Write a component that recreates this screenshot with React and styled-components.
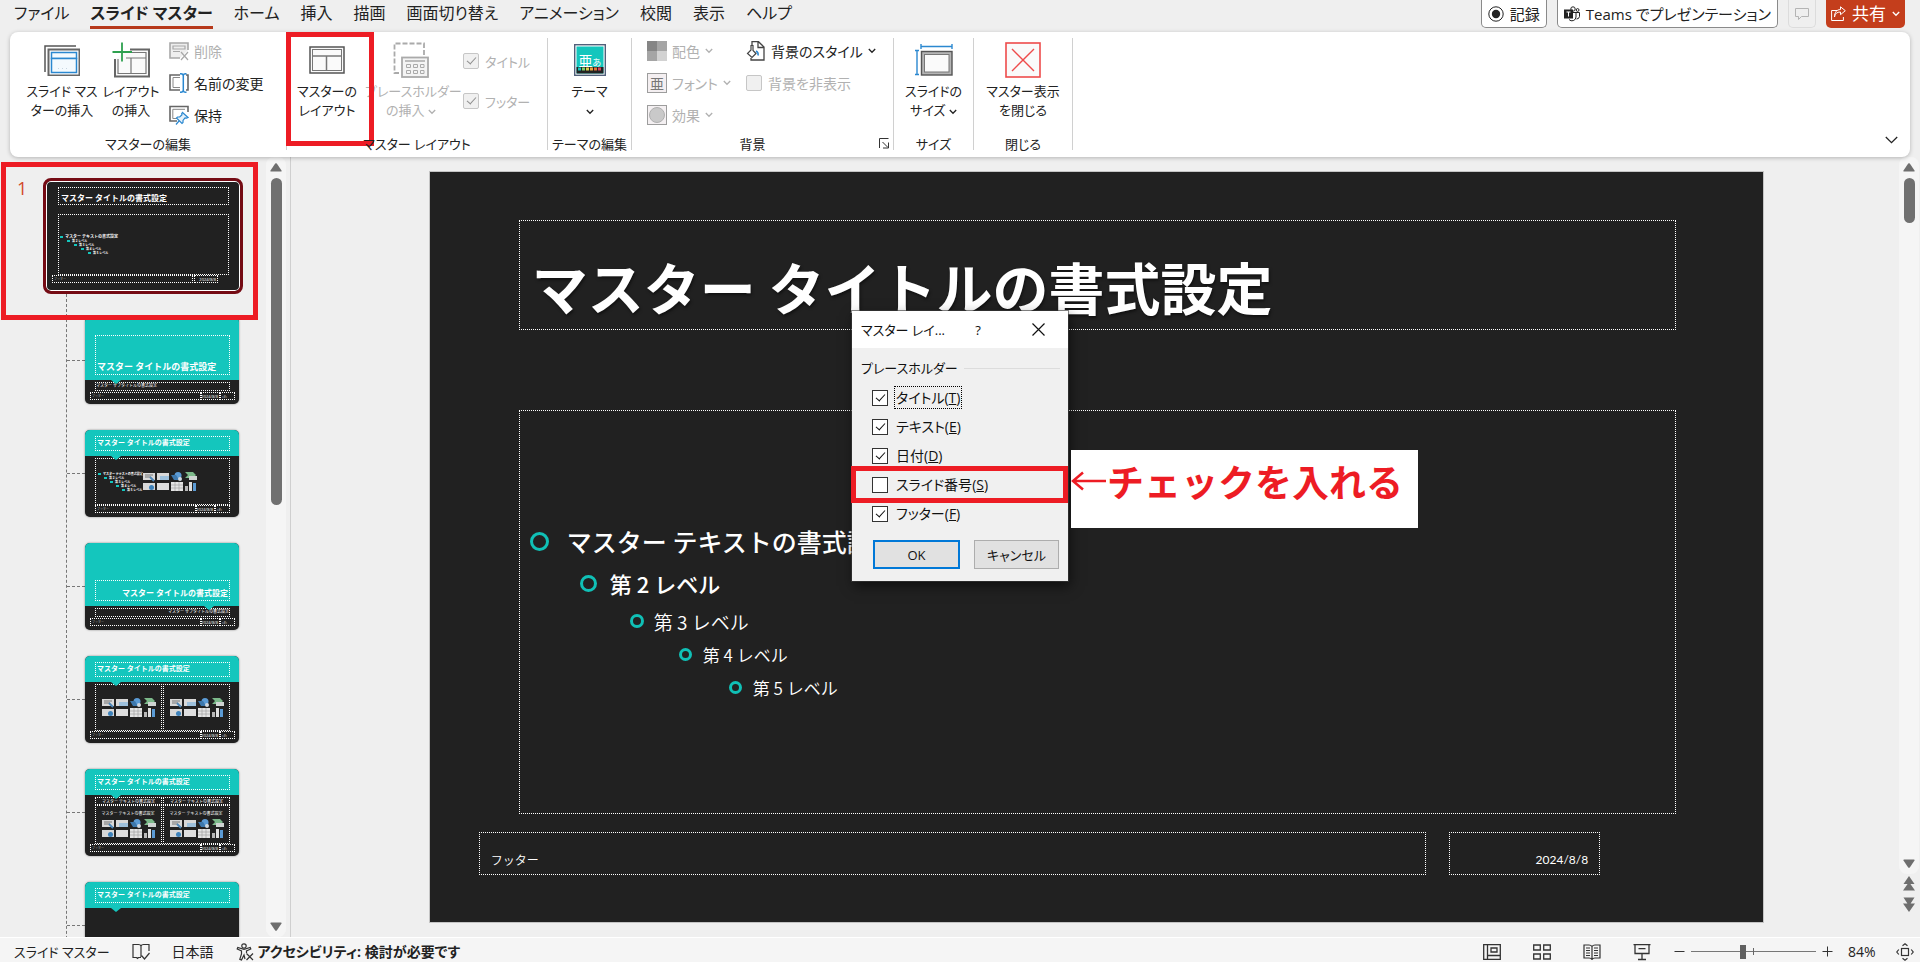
import React from 'react';
import styled, { createGlobalStyle } from 'styled-components';

const TEAL = '#14c6bd';
const RED = '#ed1c24';
const DARK = '#212121';

const TABS = [
  'ファイル',
  'スライド マスター',
  'ホーム',
  '挿入',
  '描画',
  '画面切り替え',
  'アニメーション',
  '校閲',
  '表示',
  'ヘルプ',
];

const LEVELS = [
  { text: 'マスター テキストの書式設定', size: 25, row: 41, indent: 0, ring: 19, gap: 18, weight: 500 },
  { text: '第 2 レベル', size: 22, row: 43, indent: 50, ring: 17, gap: 13, weight: 500 },
  { text: '第 3 レベル', size: 19, row: 33, indent: 100, ring: 14, gap: 10, weight: 350 },
  { text: '第 4 レベル', size: 17, row: 33, indent: 149, ring: 13, gap: 11, weight: 350 },
  { text: '第 5 レベル', size: 17, row: 33, indent: 199, ring: 13, gap: 11, weight: 350 },
];

const PLACEHOLDERS = [
  { id: 'title', label: 'タイトル', accessKey: 'T', checked: true, focused: true },
  { id: 'text', label: 'テキスト', accessKey: 'E', checked: true },
  { id: 'date', label: '日付', accessKey: 'D', checked: true },
  { id: 'number', label: 'スライド番号', accessKey: 'S', checked: false, marked: true },
  { id: 'footer', label: 'フッター', accessKey: 'F', checked: true },
];

const SLIDE_TITLE = 'マスター タイトルの書式設定';
const SLIDE_TEXT = 'マスター テキストの書式設定';

function App() {
  return (
    <Shell>
      <GlobalStyle />
      <TopBar />
      <Ribbon />
      <Workspace>
        <ThumbnailPanel />
        <Canvas>
          <Slide />
        </Canvas>
        <CanvasScrollbar />
      </Workspace>
      <StatusBar />
      <LayoutDialog />
    </Shell>
  );
}

/* ---------- Tabs ---------- */

const TopBar = () => (
  <TabBar>
    <TabList>
      {TABS.map((tab) => (
        <Tab key={tab} $active={tab === 'スライド マスター'}>
          {tab}
        </Tab>
      ))}
    </TabList>
    <TopActions>
      <OutlineButton>
        <svg width="16" height="16" viewBox="0 0 16 16">
          <circle cx="8" cy="8" r="7.2" fill="none" stroke="#222" />
          <circle cx="8" cy="8" r="4.2" fill="#222" />
        </svg>
        記録
      </OutlineButton>
      <OutlineButton>
        <svg width="16" height="16" viewBox="0 0 16 16" fill="none" stroke="#222">
          <circle cx="9" cy="3" r="2.2" />
          <circle cx="13.6" cy="4" r="1.4" />
          <path d="M8 6.5h7.5v4a3 3 0 0 1-3 2.5M12 6.5v4.5a4 4 0 0 1-7 2.5" />
          <rect x="0.5" y="4" width="8" height="8" fill="#222" />
          <path d="M2.5 6h4M4.5 6v4.5" stroke="#fff" />
        </svg>
        Teams でプレゼンテーション
      </OutlineButton>
      <OutlineButton $faded aria-label="コメント">
        <svg width="14" height="14" viewBox="0 0 14 14" fill="none" stroke="#b4b4b4">
          <path d="M.5 1.5h13v8H6.5L3.5 12.5v-3H.5z" />
        </svg>
      </OutlineButton>
      <ShareButton>
        <svg width="15" height="16" viewBox="0 0 15 16" fill="none" stroke="#fff">
          <path d="M6 4.5H.6v10h11.8V11" />
          <path d="M3.5 11c.4-3.5 2.5-5 6-5V8.7L14.3 4.7 9.5.8V3.5C5.5 3.7 3.6 6.5 3.5 11z" />
        </svg>
        共有
        <Chevron />
      </ShareButton>
    </TopActions>
  </TabBar>
);

const Chevron = () => (
  <svg width="8" height="6" viewBox="0 0 8 6" fill="none" stroke="currentColor" strokeWidth="1.3">
    <path d="M.8 1 4 4.3 7.2 1" />
  </svg>
);

/* ---------- Ribbon ---------- */

const Ribbon = () => (
  <RibbonBar>
    <Group $width={277} label="マスターの編集" $inset={16}>
      <BigButton $width={72}>
        <IconSlot>
          <InsertMasterIcon />
        </IconSlot>
        スライド マス
        <br />
        ターの挿入
      </BigButton>
      <BigButton $width={66}>
        <IconSlot>
          <InsertLayoutIcon />
        </IconSlot>
        レイアウト
        <br />
        の挿入
      </BigButton>
      <SmallColumn $before={5}>
        <SmallButton disabled>
          <DeleteIcon />
          削除
        </SmallButton>
        <SmallButton>
          <RenameIcon />
          名前の変更
        </SmallButton>
        <SmallButton>
          <PreserveIcon />
          保持
        </SmallButton>
      </SmallColumn>
    </Group>

    <Group $width={261} label="マスター レイアウト" $inset={2}>
      <BigButton $width={76}>
        <IconSlot>
          <LayoutIcon />
        </IconSlot>
        マスターの
        <br />
        レイアウト
      </BigButton>
      <BigButton $width={92} disabled>
        <IconSlot>
          <PlaceholderIcon />
        </IconSlot>
        プレースホルダー
        <br />
        の挿入 <Chevron />
      </BigButton>
      <CheckColumn>
        <CheckLabel>
          <RibbonCheck type="checkbox" defaultChecked disabled />
          タイトル
        </CheckLabel>
        <CheckLabel>
          <RibbonCheck type="checkbox" defaultChecked disabled />
          フッター
        </CheckLabel>
      </CheckColumn>
      <RibbonMark />
    </Group>

    <Group $width={84} label="テーマの編集">
      <BigButton $width={83}>
        <IconSlot>
          <ThemeIcon />
        </IconSlot>
        テーマ
        <br />
        <Chevron />
      </BigButton>
    </Group>

    <Group $width={262} label="背景" $inset={15} launcher>
      <SmallColumn $width={99}>
        <SmallButton disabled>
          <ColorsIcon />
          配色 <Chevron />
        </SmallButton>
        <SmallButton disabled>
          <FontsIcon />
          フォント <Chevron />
        </SmallButton>
        <SmallButton disabled>
          <EffectsIcon />
          効果 <Chevron />
        </SmallButton>
      </SmallColumn>
      <SmallColumn>
        <SmallButton>
          <BackgroundIcon />
          背景のスタイル <Chevron />
        </SmallButton>
        <CheckLabel $large>
          <RibbonCheck type="checkbox" disabled />
          背景を非表示
        </CheckLabel>
      </SmallColumn>
    </Group>

    <Group $width={80} label="サイズ">
      <BigButton $width={79}>
        <IconSlot>
          <SlideSizeIcon />
        </IconSlot>
        スライドの
        <br />
        サイズ <Chevron />
      </BigButton>
    </Group>

    <Group $width={99} label="閉じる">
      <BigButton $width={98}>
        <IconSlot>
          <svg width="36" height="36" viewBox="0 0 36 36" fill="none" stroke="#ee4b4b">
            <rect x="1" y="1" width="34" height="34" fill="#fafafa" strokeWidth="1.6" />
            <path d="M7 7l22 22M29 7 7 29" strokeWidth="1.4" />
          </svg>
        </IconSlot>
        マスター表示
        <br />
        を閉じる
      </BigButton>
    </Group>

    <CollapseButton aria-label="リボンを折りたたむ">
      <svg width="13" height="8" viewBox="0 0 13 8" fill="none" stroke="#222" strokeWidth="1.3">
        <path d="M.8 1 6.5 6.6 12.2 1" />
      </svg>
    </CollapseButton>
  </RibbonBar>
);

const Group = ({ label, launcher, children, ...rest }) => (
  <GroupBox {...rest}>
    <GroupBody>{children}</GroupBody>
    <GroupLabel $launcher={launcher}>
      {label}
      {launcher && (
        <Launcher aria-label="背景の書式設定">
          <svg width="10" height="11" viewBox="0 0 10 11" fill="none" stroke="#333">
            <path d="M.5 10V.5H9.5M3.5 4l5.5 5.5M9.5 4.5V10H4" />
          </svg>
        </Launcher>
      )}
    </GroupLabel>
  </GroupBox>
);

const InsertMasterIcon = () => (
  <svg width="36" height="32" viewBox="0 0 36 32" fill="none">
    <path d="M1 28V2H32" stroke="#555" strokeWidth="1.5" />
    <rect x="4.5" y="5.5" width="31" height="26" fill="#fff" stroke="#666" strokeWidth="2" />
    <rect x="7.5" y="8.5" width="25" height="6" stroke="#2b88d0" strokeWidth="1.5" fill="#f4fafe" />
    <rect x="7.5" y="14.5" width="25" height="14" stroke="#2b88d0" strokeWidth="1.5" fill="#f4fafe" />
    <path d="M14 24.5h12" stroke="#c8d6e2" strokeDasharray="1 3" />
  </svg>
);

const InsertLayoutIcon = () => (
  <svg width="38" height="36" viewBox="0 0 38 36" fill="none">
    <path d="M18 7.5H37V34.5H3V17" stroke="#666" strokeWidth="2" fill="#fafafa" />
    <path d="M6 17V31.5H34V10.5H18M34 16H14M19 16.5v15" stroke="#777" strokeWidth="1.2" />
    <path d="M10 .5V19.5M.5 10H20" stroke="#2ea04f" strokeWidth="1.8" />
  </svg>
);

const LayoutIcon = () => (
  <svg width="36" height="28" viewBox="0 0 36 28" fill="none">
    <rect x="1" y="1" width="34" height="26" stroke="#555" strokeWidth="1.5" fill="#fafafa" />
    <rect x="3.5" y="3.5" width="29" height="21" stroke="#777" />
    <path d="M3.5 10H32.5M17.5 10V24.5" stroke="#777" strokeWidth="1.5" />
  </svg>
);

const PlaceholderIcon = () => (
  <svg width="36" height="36" viewBox="0 0 36 36" fill="none" stroke="#aaa">
    <path d="M6 31H1.5V1.5H31V13" strokeWidth="1.8" strokeDasharray="5 2" />
    <rect x="9" y="15.5" width="26" height="19.5" strokeWidth="1.8" fill="#f4f4f4" />
    <path d="M12 19h20" strokeWidth="1.5" />
    <path d="M13.5 22.5h4v3h-4zM20.5 22.5h4v3h-4zM27.5 22.5h3.5v3h-3.5zM13.5 28.5h4v3h-4zM20.5 28.5h4v3h-4zM27.5 28.5h3.5v3h-3.5z" />
  </svg>
);

const DeleteIcon = () => (
  <svg width="20" height="20" viewBox="0 0 20 20" fill="none" stroke="#a8a8a8">
    <path d="M11 17H1V2H19V9" strokeWidth="1.6" fill="#eee" />
    <path d="M4 5h12v3H4zM4 10.5h7" strokeWidth="1.2" />
    <path d="M12 11l7 8M19 11l-7 8" strokeWidth="1.2" />
  </svg>
);

const RenameIcon = () => (
  <svg width="20" height="20" viewBox="0 0 20 20" fill="none">
    <path d="M11 2H1V17H11M17 2h2V17h-2" stroke="#666" strokeWidth="1.6" />
    <path d="M11 4.5H4V14.5h7" stroke="#888" />
    <path d="M11 .7c2.5 0 3.3.6 3.3 2V17.3c0 1.400-.8 2-3.3 2M17.5.7c-2.3 0-3.2.6-3.2 2M17.5 19.3c-2.3 0-3.2-.6-3.2-2" stroke="#2b88d0" strokeWidth="1.5" />
  </svg>
);

const PreserveIcon = () => (
  <svg width="20" height="20" viewBox="0 0 20 20" fill="none">
    <path d="M8 16H1V1.5H19V7" stroke="#666" strokeWidth="1.6" />
    <path d="M8 13.5H3.8V4.3H16" stroke="#888" />
    <path d="M13.5 7.5l5.5 5-1.5.7-1.5-.3-2 2.5v2.1l-1 1L7.5 13l1-1h2.2l2.3-2.2-.3-1.2zM10 16l-3 3.5" stroke="#2b88d0" strokeWidth="1.2" fill="#e6f2fb" />
  </svg>
);

const ThemeIcon = () => (
  <svg width="32" height="32" viewBox="0 0 32 32">
    <rect x=".7" y=".7" width="30.6" height="30.6" fill="#fff" stroke="#51607a" strokeWidth="1.4" />
    <rect x="2.5" y="2.5" width="27" height="27" fill={TEAL} />
    <rect x="2.5" y="23" width="27" height="6.5" fill="#222" />
    <text x="4.5" y="21.5" fontSize="14" fill="#fff">亜</text>
    <text x="18.5" y="21.5" fontSize="9" fill="#fff">あ</text>
    {['#14c6bd', '#7fcf6b', '#d9d04a', '#e8a33c', '#e0733a', '#d9435a'].map((color, i) => (
      <rect key={color} x={4 + i * 4} y="23.5" width="3" height="3" fill={color} />
    ))}
  </svg>
);

const ColorsIcon = () => (
  <svg width="20" height="20" viewBox="0 0 20 20">
    <rect width="10" height="10" fill="#858585" />
    <rect x="10" width="10" height="10" fill="#a5a5a5" />
    <rect y="10" width="10" height="10" fill="#a5a5a5" />
    <rect x="10" y="10" width="10" height="10" fill="#d2d2d2" />
  </svg>
);

const FontsIcon = () => (
  <svg width="20" height="20" viewBox="0 0 20 20">
    <rect x=".5" y=".5" width="19" height="19" fill="#f4eff1" stroke="#9d9d9d" />
    <text x="3" y="15.5" fontSize="14" fill="#777">亜</text>
  </svg>
);

const EffectsIcon = () => (
  <svg width="20" height="20" viewBox="0 0 20 20">
    <rect x=".5" y=".5" width="19" height="19" fill="#f4f0f2" stroke="#9d9d9d" />
    <circle cx="10" cy="10" r="7.5" fill="#c9c9c9" stroke="#b0b0b0" />
  </svg>
);

const BackgroundIcon = () => (
  <svg width="20" height="20" viewBox="0 0 20 20" fill="none" stroke="#444">
    <path d="M6 4V.7h6.5L18 6V19H5v-2M12 1v5.5h6" strokeWidth="1.3" />
    <path d="M10 10c2 1 2.5 2.5 2 4.5" stroke="#2b88d0" strokeWidth="1.5" />
    <path d="M5 4.5h2v5l3 3-4 4-4.5-4L5 9z" fill="#fff" strokeWidth="1.2" />
  </svg>
);

const SlideSizeIcon = () => (
  <svg width="38" height="32" viewBox="0 0 38 32" fill="none">
    <path d="M6 2.5H37.5M6 0v5M37 0v5M2 6.5V30.5M0 6.5h4M0 30.5h4" stroke="#2b88d0" strokeWidth="1.4" />
    <rect x="6.5" y="7.5" width="30.5" height="23.5" stroke="#555" strokeWidth="1.4" fill="#b5b5b5" />
    <rect x="9.5" y="10.5" width="24.5" height="17.5" stroke="#777" fill="#fafafa" />
  </svg>
);

/* ---------- Thumbnails ---------- */

const ThumbnailPanel = () => (
  <Panel>
    <PanelContent>
      <MasterRow>
        <MasterNumber>1</MasterNumber>
        <MasterThumb>
          <MasterTitle $size={8}>{SLIDE_TITLE}</MasterTitle>
          <MasterBody>
            <TinyList>
              {LEVELS.map((level, i) => (
                <TinyItem key={level.text} $indent={i * 7} $size={i === 0 ? 4 : 3}>
                  {level.text}
                </TinyItem>
              ))}
            </TinyList>
          </MasterBody>
          <MasterFooter>
            <MiniBox $grow>
              <TinyText $faint>フッター</TinyText>
            </MiniBox>
            <MiniBox $width={24} $align="flex-end">
              <TinyText>2024/8/8</TinyText>
            </MiniBox>
          </MasterFooter>
        </MasterThumb>
        <PanelMark />
      </MasterRow>
      <Tree>
        <LayoutThumb tall subtitle />
        <LayoutThumb>
          <MiniBox $grow $pad={2}>
            <TinyBullets />
            <ContentIcons />
          </MiniBox>
        </LayoutThumb>
        <LayoutThumb tall subtitle right />
        <LayoutThumb wide>
          <MiniBox $grow $center>
            <ContentIcons />
          </MiniBox>
          <MiniBox $grow $center>
            <ContentIcons />
          </MiniBox>
        </LayoutThumb>
        <LayoutThumb wide>
          <ComparisonHalf />
          <ComparisonHalf />
        </LayoutThumb>
        <LayoutThumb />
      </Tree>
    </PanelContent>
    <Scrollbar>
      <ArrowButton aria-label="上へスクロール">
        <ArrowGlyph up />
      </ArrowButton>
      <ScrollThumb $length={327} />
      <ScrollSpacer />
      <ArrowButton aria-label="下へスクロール">
        <ArrowGlyph />
      </ArrowButton>
    </Scrollbar>
  </Panel>
);

const LayoutThumb = ({ tall, subtitle, right, wide, children }) => (
  <Branch>
    <ThumbCard>
      <Band $tall={tall}>
        <BandTitle $size={tall && !right ? 9 : tall ? 8 : 7} $right={right}>
          {SLIDE_TITLE}
        </BandTitle>
        <Pointer $right={right} />
      </Band>
      {subtitle && (
        <SubtitleBox $right={right}>
          <TinyText>マスター サブタイトルの書式設定</TinyText>
        </SubtitleBox>
      )}
      {children && <ThumbBody>{children}</ThumbBody>}
      {(subtitle || children) && (
        <ThumbFooter $wide={subtitle || wide}>
          <MiniBox $grow>
            <TinyText $faint>フッター</TinyText>
          </MiniBox>
          <MiniBox $width={19} $align="flex-end">
            <TinyText>2024/8/8</TinyText>
          </MiniBox>
          <MiniBox $width={15}>
            <TinyText>‹#›</TinyText>
          </MiniBox>
        </ThumbFooter>
      )}
    </ThumbCard>
  </Branch>
);

const ComparisonHalf = () => (
  <Half>
    <HalfHeading>
      <TinyText>{SLIDE_TEXT}</TinyText>
    </HalfHeading>
    <MiniBox $grow $center>
      <HalfStack>
        <TinyText>{SLIDE_TEXT}</TinyText>
        <ContentIcons />
      </HalfStack>
    </MiniBox>
  </Half>
);

const TinyBullets = () => (
  <TinyList>
    {LEVELS.map((level, i) => (
      <TinyItem key={level.text} $indent={i * 6} $size={3}>
        {level.text}
      </TinyItem>
    ))}
  </TinyList>
);

const ContentIcons = () => (
  <svg width="54" height="19" viewBox="0 0 54 19">
    <rect y="1" width="12" height="7" fill="#d8d8d8" />
    <path d="M2 3h8M2 5h6" stroke="#777" />
    <path d="M7 5l4 4" stroke="#4d86b8" strokeWidth="2" />
    <rect x="14" y="1" width="12" height="7" fill="#d8d8d8" />
    <rect x="17" y="4" width="9" height="4" fill="#9dc0dc" />
    <circle cx="35" cy="3.5" r="3.5" fill="#5b9bd5" />
    <path d="M28 3h5l3 5h-5z" fill="#3d78ad" />
    <circle cx="37" cy="7" r="2" fill="#d0d8e0" />
    <path d="M42 0h8l3 3-3 3h-8l3-3z" fill="#7cb98a" />
    <rect x="46" y="4" width="8" height="4" fill="#cfd4d2" />
    <rect y="11" width="12" height="7" fill="#d8d8d8" />
    <circle cx="8.5" cy="15.5" r="2.5" fill="#3d82bb" />
    <rect x="14" y="11" width="12" height="7" fill="#dedede" />
    <rect x="28" y="10" width="12" height="9" fill="#e4e4e4" />
    <path d="M28 13h12M28 16h12M32 10v9M36 10v9" stroke="#999" strokeWidth=".6" />
    <rect x="42" y="14" width="3" height="5" fill="#b8b8b8" />
    <rect x="46" y="10" width="3" height="9" fill="#e0e0e0" />
    <rect x="50" y="11" width="3" height="8" fill="#5b9bd5" />
  </svg>
);

const ArrowGlyph = ({ up }) => (
  <svg width="12" height="9" viewBox="0 0 12 9" fill="#6e6e6e">
    {up ? (
      <path d="M5.2.6Q6-.3 6.8.6L11.5 7.4Q12 8.6 10.8 8.6H1.2Q0 8.6.5 7.4z" />
    ) : (
      <path d="M5.2 8.4Q6 9.3 6.8 8.4L11.5 1.6Q12 .4 10.8.4H1.2Q0 .4.5 1.6z" />
    )}
  </svg>
);

/* ---------- Slide ---------- */

const Slide = () => (
  <SlidePage>
    <SlideTitle>{SLIDE_TITLE}</SlideTitle>
    <SlideBody>
      {LEVELS.map((level) => (
        <Level key={level.text} $level={level}>
          <Ring $size={level.ring} />
          {level.text}
        </Level>
      ))}
    </SlideBody>
    <SlideFooter>
      <FooterBox>フッター</FooterBox>
      <DateBox>2024/8/8</DateBox>
    </SlideFooter>
  </SlidePage>
);

const CanvasScrollbar = () => (
  <ScrollColumn>
    <Scrollbar>
      <ArrowButton aria-label="上へスクロール">
        <ArrowGlyph up />
      </ArrowButton>
      <ScrollThumb $length={45} />
      <ScrollSpacer />
      <ArrowButton aria-label="下へスクロール">
        <ArrowGlyph />
      </ArrowButton>
    </Scrollbar>
    <PageButton aria-label="前のスライド">
      <svg width="12" height="15" viewBox="0 0 12 15" fill="#6e6e6e">
        <path d="M6 0l5.5 8h-11zM6 6l6 8.5H0z" />
      </svg>
    </PageButton>
    <PageButton aria-label="次のスライド">
      <svg width="12" height="15" viewBox="0 0 12 15" fill="#6e6e6e">
        <path d="M6 9L.5.5h11zM6 15L0 6.5h12z" />
      </svg>
    </PageButton>
  </ScrollColumn>
);

/* ---------- Dialog ---------- */

const LayoutDialog = () => (
  <DialogBox role="dialog" aria-label="マスター レイアウト">
    <DialogHeader>
      <DialogTitle>マスター レイ...</DialogTitle>
      <HeaderButton>?</HeaderButton>
      <HeaderButton aria-label="閉じる">
        <svg width="13" height="13" viewBox="0 0 13 13" stroke="#111" strokeWidth="1.2">
          <path d="M.5.5l12 12M12.5.5l-12 12" />
        </svg>
      </HeaderButton>
    </DialogHeader>
    <FieldSet>
      <FieldHeading>プレースホルダー</FieldHeading>
      {PLACEHOLDERS.map((item) => (
        <DialogRow key={item.id}>
          <DialogCheck type="checkbox" id={item.id} defaultChecked={item.checked} />
          <DialogLabel htmlFor={item.id} $focused={item.focused}>
            {item.label}(<u>{item.accessKey}</u>)
          </DialogLabel>
          {item.marked && (
            <>
              <RowMark />
              <Note>
                <NoteArrow width="36" height="20" viewBox="0 0 36 20">
                  <path d="M12 1.5L2 10l10 8.5M2 10H35" />
                </NoteArrow>
                チェックを入れる
              </Note>
            </>
          )}
        </DialogRow>
      ))}
    </FieldSet>
    <DialogActions>
      <DialogButton $primary>OK</DialogButton>
      <DialogButton>キャンセル</DialogButton>
    </DialogActions>
  </DialogBox>
);

/* ---------- Status bar ---------- */

const StatusBar = () => (
  <StatusRow>
    <ViewName>スライド マスター</ViewName>
    <StatusButton aria-label="スペル チェック">
      <svg width="18" height="17" viewBox="0 0 18 17" fill="none" stroke="#333" strokeWidth="1.2">
        <path d="M9 14.5H6.5L5.5 15.5 4.5 14.5H1V1.5h5.5Q8.5 1.5 9 3q.5-1.5 2.5-1.5H17V8M9 3v11" />
        <path d="M9.5 12.5l3 3.5L17.5 10" />
      </svg>
    </StatusButton>
    <StatusButton>日本語</StatusButton>
    <AccessibilityButton>
      <svg width="18" height="18" viewBox="0 0 18 18" fill="none" stroke="#333" strokeWidth="1.2">
        <circle cx="8" cy="3" r="2.2" />
        <path d="M9 16l-1-4-2.5 5-1.7-.7L5.5 11V8L1.2 6 1.8 4.5 8 6.3 14.2 4.5l.6 1.5L10.5 8v2" />
        <path d="M10.5 10.5l6.5 6.5M17 10.5L10.5 17" />
      </svg>
      アクセシビリティ: 検討が必要です
    </AccessibilityButton>
    <ViewButtons>
      <ViewButton aria-label="標準">
        <svg width="18" height="16" viewBox="0 0 18 16" fill="none" stroke="#333" strokeWidth="1.3">
          <path d="M.7.7H17.3V15.3H.7zM4.5.7V15.3M4.5 11.5H17.3M8 4h6v4H8z" />
        </svg>
      </ViewButton>
      <ViewButton aria-label="スライド一覧">
        <svg width="18" height="16" viewBox="0 0 18 16" fill="none" stroke="#333" strokeWidth="1.3">
          <path d="M.7 1h6.6v5H.7zM10.7 1h6.6v5h-6.6zM.7 10h6.6v5H.7zM10.7 10h6.6v5h-6.6z" />
        </svg>
      </ViewButton>
      <ViewButton aria-label="閲覧表示">
        <svg width="18" height="16" viewBox="0 0 18 16" fill="none" stroke="#333" strokeWidth="1.2">
          <path d="M9 2.5Q8 1 6 1H1V14h5q2 0 3 1.5Q10 14 12 14h5V1H12Q10 1 9 2.5zV15M3 4h4M3 6.5h4M3 9h4M3 11.5h4M11 4h4M11 6.5h4M11 9h4M11 11.5h4" />
        </svg>
      </ViewButton>
      <ViewButton aria-label="スライド ショー">
        <svg width="18" height="18" viewBox="0 0 18 18" fill="none" stroke="#333" strokeWidth="1.3">
          <path d="M.5 1.7h17M2 1.7V10.5H16V1.7M5.5 5.7h7M9 10.5V16M5 16.5h8" />
        </svg>
      </ViewButton>
    </ViewButtons>
    <ZoomControls>
      <ViewButton aria-label="縮小">
        <svg width="11" height="11" viewBox="0 0 11 11" stroke="#333">
          <path d="M.5 5.5h10" />
        </svg>
      </ViewButton>
      <ZoomSlider type="range" min="0" max="100" defaultValue="41" aria-label="ズーム" />
      <ViewButton aria-label="拡大">
        <svg width="11" height="11" viewBox="0 0 11 11" stroke="#333">
          <path d="M.5 5.5h10M5.5.5v10" />
        </svg>
      </ViewButton>
    </ZoomControls>
    <ZoomValue>84%</ZoomValue>
    <ViewButton aria-label="ウィンドウに合わせる">
      <svg width="18" height="18" viewBox="0 0 18 18" fill="none" stroke="#333" strokeWidth="1.2">
        <rect x="5.5" y="5.5" width="7" height="7" />
        <path d="M6.5 2.8L9 .8l2.5 2M6.5 15.2l2.5 2 2.5-2M2.8 6.5L.8 9l2 2.5M15.2 6.5l2 2.5-2 2.5" />
      </svg>
    </ViewButton>
  </StatusRow>
);

/* ---------- Styles ---------- */

const GlobalStyle = createGlobalStyle`
  *, *::before, *::after {
    box-sizing: border-box;
  }

  body {
    margin: 0;
    background: #efefef;
    color: #222;
    font-family: "Open Sans", "Noto Sans CJK JP", sans-serif;
    font-size: 14px;
    /* UI text is set with proportional kana */
    font-feature-settings: "palt";
  }

  button, input {
    font: inherit;
    font-feature-settings: inherit;
    color: inherit;
    margin: 0;
  }

  button {
    padding: 0;
    border: none;
    background: transparent;
    white-space: nowrap;
  }

  svg {
    flex-shrink: 0;
  }
`;

const Shell = styled.div`
  display: flex;
  flex-direction: column;
  height: 100vh;
  overflow: hidden;
`;

const TabBar = styled.header`
  display: flex;
  justify-content: space-between;
  align-items: flex-start;
  height: 32px;
  flex-shrink: 0;
  padding: 0 15px 0 14px;
`;

const TabList = styled.nav`
  display: flex;
  gap: 21px;
`;

const Tab = styled.button`
  height: 29px;
  padding-bottom: 1px;
  border-bottom: 3px solid ${(p) => (p.$active ? '#b7391b' : 'transparent')};
  font-size: 16px;
  line-height: 26px;
  font-weight: ${(p) => (p.$active ? 700 : 400)};
`;

const TopActions = styled.div`
  display: flex;
  gap: 10px;
`;

const OutlineButton = styled.button`
  display: flex;
  align-items: center;
  gap: 6px;
  height: 28px;
  padding: 0 6px;
  border: 1px solid ${(p) => (p.$faded ? '#dcdcdc' : '#8a8a8a')};
  border-top: none;
  border-radius: 0 0 5px 5px;
  background: ${(p) => (p.$faded ? 'transparent' : '#fff')};
  font-size: 15px;
  line-height: 26px;
`;

const ShareButton = styled.button`
  display: flex;
  align-items: center;
  gap: 6px;
  height: 28px;
  padding: 0 5px;
  border-radius: 0 0 5px 5px;
  background: #c43e1c;
  color: #fff;
  font-size: 17px;
  line-height: 26px;
`;

const RibbonBar = styled.section`
  position: relative;
  z-index: 1;
  display: flex;
  height: 125px;
  flex-shrink: 0;
  margin: 0 10px;
  padding: 6px 0 7px;
  border-radius: 8px;
  background: #fff;
  box-shadow: 0 1px 4px rgba(0, 0, 0, 0.25);
`;

const GroupBox = styled.div`
  position: relative;
  display: flex;
  flex-direction: column;
  width: ${(p) => p.$width}px;
  flex-shrink: 0;
  padding-left: ${(p) => p.$inset || 0}px;
  border-right: 1px solid #d0d0d0;
`;

const GroupBody = styled.div`
  display: flex;
  flex: 1;
`;

const GroupLabel = styled.div`
  position: absolute;
  left: 0;
  right: 0;
  bottom: -3px;
  padding-right: ${(p) => (p.$launcher ? 20 : 0)}px;
  font-size: 13px;
  line-height: 18px;
  text-align: center;
  white-space: nowrap;
`;

const Launcher = styled.button`
  position: absolute;
  right: 4px;
  bottom: 0;
`;

const BigButton = styled.button`
  width: ${(p) => p.$width}px;
  align-self: flex-start;
  font-size: 13px;
  line-height: 19px;
  text-align: center;

  &:disabled {
    color: #b1b1b1;
  }
`;

const IconSlot = styled.span`
  display: flex;
  align-items: center;
  justify-content: center;
  height: 44px;
`;

const SmallColumn = styled.div`
  display: flex;
  flex-direction: column;
  gap: 6px;
  width: ${(p) => (p.$width ? `${p.$width}px` : 'auto')};
  margin-left: ${(p) => p.$before || 0}px;
`;

const SmallButton = styled.button`
  display: flex;
  align-items: center;
  gap: 5px;
  height: 26px;

  &:disabled {
    color: #b1b1b1;
  }
`;

const CheckColumn = styled.div`
  display: flex;
  flex-direction: column;
  gap: 14px;
  padding-top: 10px;
  margin-left: 6px;
`;

const CheckLabel = styled.label`
  display: flex;
  align-items: center;
  gap: 6px;
  height: 26px;
  color: #b1b1b1;
  font-size: ${(p) => (p.$large ? 14 : 13)}px;
  white-space: nowrap;
`;

const Check = styled.input`
  appearance: none;
  position: relative;
  width: 16px;
  height: 16px;
  flex-shrink: 0;

  &:checked::before {
    content: '';
    position: absolute;
    top: 1px;
    left: 5px;
    width: 5px;
    height: 9px;
    border: solid currentColor;
    border-width: 0 1px 1px 0;
    transform: rotate(42deg);
  }
`;

const RibbonCheck = styled(Check)`
  border: 1px solid #c6c6c6;
  border-radius: 2px;
  background: #f0f0f0;
  color: #8f8f8f;
`;

const RibbonMark = styled.div`
  position: absolute;
  top: -6px;
  left: -1px;
  width: 88px;
  height: 114px;
  border: 5px solid ${RED};
`;

const CollapseButton = styled.button`
  align-self: flex-end;
  margin: 0 12px 6px auto;
  height: 8px;
  line-height: 0;
`;

const Workspace = styled.main`
  display: flex;
  flex: 1;
  min-height: 0;
`;

const Panel = styled.aside`
  display: flex;
  width: 291px;
  flex-shrink: 0;
  border-right: 1px solid #cfcfcf;
  overflow: hidden;
`;

const PanelContent = styled.div`
  flex: 1;
  font-feature-settings: normal;
`;

const MasterRow = styled.div`
  position: relative;
  display: flex;
  align-items: flex-start;
  padding: 21px 0 0 17px;
`;

const MasterNumber = styled.span`
  width: 26px;
  color: #d2492a;
  font-size: 18px;
  line-height: 20px;
`;

const PanelMark = styled.div`
  position: absolute;
  z-index: 2;
  top: 5px;
  left: 1px;
  width: 257px;
  height: 158px;
  border: 5px solid ${RED};
`;

const MasterThumb = styled.div`
  display: flex;
  flex-direction: column;
  width: 200px;
  height: 116px;
  padding: 6px 11px 6px 6px;
  border: 3px solid #750b14;
  border-radius: 8px;
  background: ${DARK};
  box-shadow: inset 0 0 0 1px #fff;
  color: #fff;
`;

const MiniBox = styled.div`
  display: flex;
  align-items: center;
  justify-content: ${(p) => (p.$center ? 'center' : p.$align || 'flex-start')};
  flex: ${(p) => (p.$grow ? '1' : 'none')};
  width: ${(p) => (p.$width ? `${p.$width}px` : 'auto')};
  min-width: 0;
  padding: 0 ${(p) => p.$pad || 1}px;
  border: 1px dotted #fff;
  overflow: hidden;
`;

const MasterTitle = styled(MiniBox)`
  height: 18px;
  margin-left: 6px;
  padding: 3px 2px 0;
  font-size: ${(p) => p.$size}px;
  line-height: 12px;
  font-weight: 700;
  white-space: nowrap;
`;

const MasterBody = styled(MiniBox)`
  height: 61px;
  margin: 9px 0 0 6px;
`;

const MasterFooter = styled.div`
  display: flex;
  gap: 1px;
  height: 8px;
  margin-right: 11px;
`;

const TinyText = styled.span`
  color: ${(p) => (p.$faint ? '#999' : '#fff')};
  font-size: ${(p) => (p.$faint ? 3 : 4)}px;
  line-height: 5px;
  white-space: nowrap;
`;

const TinyList = styled.ul`
  margin: 0;
  padding: 0;
  list-style: none;
`;

const TinyItem = styled.li`
  display: flex;
  align-items: center;
  gap: 2px;
  margin-left: ${(p) => p.$indent}px;
  font-size: ${(p) => p.$size}px;
  line-height: 4px;
  font-weight: 700;
  white-space: nowrap;

  &::before {
    content: '';
    width: 3px;
    height: 2px;
    background: ${TEAL};
  }
`;

const Tree = styled.div`
  display: flex;
  flex-direction: column;
  gap: 26px;
  margin-left: 66px;
  padding-top: 23px;
  border-left: 1px dashed #777;
`;

const Branch = styled.div`
  display: flex;
  align-items: center;

  &::before {
    content: '';
    width: 18px;
    border-top: 1px dashed #777;
  }
`;

const ThumbCard = styled.div`
  display: flex;
  flex-direction: column;
  width: 154px;
  height: 87px;
  border-radius: 5px;
  background: ${DARK};
  box-shadow: 0 0 2px rgba(0, 0, 0, 0.5);
  color: #fff;
  overflow: hidden;
`;

const Band = styled.div`
  position: relative;
  display: flex;
  flex-direction: column;
  justify-content: flex-end;
  height: ${(p) => (p.$tall ? 63 : 26)}px;
  flex-shrink: 0;
  padding: 6px 9px 5px 10px;
  background: ${TEAL};
`;

const BandTitle = styled.div`
  display: flex;
  align-items: flex-end;
  justify-content: ${(p) => (p.$right ? 'flex-end' : 'flex-start')};
  height: ${(p) => (p.$size === 9 ? 40 : p.$size === 8 ? 21 : 15)}px;
  padding: 1px;
  border: 1px dotted #fff;
  font-size: ${(p) => p.$size}px;
  line-height: 12px;
  font-weight: 700;
  white-space: nowrap;
`;

const Pointer = styled.span`
  position: absolute;
  z-index: 1;
  top: 100%;
  left: ${(p) => (p.$right ? 119 : 26)}px;
  border: solid transparent;
  border-width: 4px 5px 0;
  border-top-color: ${TEAL};
`;

const SubtitleBox = styled.div`
  display: flex;
  justify-content: ${(p) => (p.$right ? 'flex-end' : 'flex-start')};
  height: 9px;
  margin: 2px 9px 1px 10px;
  border: 1px dotted #fff;
`;

const ThumbBody = styled.div`
  display: flex;
  flex: 1;
  gap: 1px;
  min-height: 0;
  padding: 2px 9px 0 10px;
`;

const ThumbFooter = styled.div`
  display: flex;
  height: 8px;
  margin: ${(p) => (p.$wide ? '0 4px 4px 5px' : '0 9px 4px 10px')};
`;

const Half = styled.div`
  display: flex;
  flex-direction: column;
  flex: 1;
  min-width: 0;
`;

const HalfHeading = styled(MiniBox)`
  height: 8px;
  justify-content: center;
`;

const HalfStack = styled.div`
  display: flex;
  flex-direction: column;
  gap: 3px;
`;

const Scrollbar = styled.div`
  display: flex;
  flex-direction: column;
  align-items: center;
  flex: 1;
  width: 20px;
  max-width: 20px;
  margin-right: 4px;
  padding: 6px 0;
  border-radius: 8px;
  background: #f5f5f5;
`;

const ArrowButton = styled.button`
  display: flex;
  height: 9px;
`;

const ScrollThumb = styled.div`
  width: 11px;
  height: ${(p) => p.$length}px;
  margin-top: 6px;
  border-radius: 6px;
  background: #707070;
`;

const ScrollSpacer = styled.div`
  flex: 1;
`;

const ScrollColumn = styled.div`
  display: flex;
  flex-direction: column;
  align-items: center;
  width: 22px;
  padding: 0 1px 25px;

  ${Scrollbar} {
    margin-right: 0;
    margin-bottom: 2px;
  }
`;

const PageButton = styled.button`
  display: flex;
  height: 15px;
  margin-bottom: 6px;

  &:last-child {
    margin-bottom: 0;
  }
`;

const Canvas = styled.section`
  display: flex;
  justify-content: center;
  flex: 1;
  min-width: 0;
  padding: 15px 0 15px 4px;
`;

const SlidePage = styled.article`
  display: flex;
  flex-direction: column;
  aspect-ratio: 16 / 9;
  height: 100%;
  padding: 48px 87px 47px 49px;
  background: ${DARK};
  box-shadow: 0 0 0 1px #c4c4c4;
  color: #fff;
  font-family: "Noto Sans CJK JP", sans-serif;
  font-feature-settings: normal;
`;

const SlideTitle = styled.h1`
  display: flex;
  align-items: flex-end;
  height: 110px;
  flex-shrink: 0;
  margin: 0 0 80px 40px;
  padding: 0 12px 11px;
  border: 1px dotted #fff;
  font-size: 56px;
  line-height: 64px;
  font-weight: 700;
  text-shadow: 1px 2px 3px rgba(0, 0, 0, 0.5);
  white-space: nowrap;
`;

const SlideBody = styled.ul`
  display: flex;
  flex-direction: column;
  justify-content: center;
  flex: 1;
  margin: 0 0 18px 40px;
  padding: 0 10px;
  border: 1px dotted #fff;
  list-style: none;
`;

const Level = styled.li`
  display: flex;
  align-items: center;
  gap: ${(p) => p.$level.gap}px;
  height: ${(p) => p.$level.row}px;
  margin-left: ${(p) => p.$level.indent}px;
  font-size: ${(p) => p.$level.size}px;
  font-weight: ${(p) => p.$level.weight};
  white-space: nowrap;
`;

const Ring = styled.span`
  width: ${(p) => p.$size}px;
  height: ${(p) => p.$size}px;
  border: 3px solid #10c0b6;
  border-radius: 50%;
`;

const SlideFooter = styled.div`
  display: flex;
  gap: 23px;
  height: 43px;
  flex-shrink: 0;
  margin-right: 76px;
`;

const FooterBox = styled.div`
  flex: 1;
  padding: 17px 11px 0;
  border: 1px dotted #fff;
  font-size: 12px;
  line-height: 20px;
  font-weight: 350;
`;

const DateBox = styled(FooterBox)`
  flex: none;
  width: 151px;
  font-family: Lato, sans-serif;
  font-weight: 400;
  text-align: right;
`;

const DialogBox = styled.div`
  position: absolute;
  z-index: 2;
  top: 311px;
  left: calc(50% - 108px);
  width: 216px;
  padding-bottom: 12px;
  background: #f0f0f0;
  box-shadow: 0 0 0 1px rgba(60, 60, 60, 0.6), 2px 5px 12px rgba(0, 0, 0, 0.6);
  color: #111;
`;

const DialogHeader = styled.div`
  display: flex;
  align-items: center;
  height: 37px;
  padding-left: 9px;
  background: #fff;
  font-size: 13px;
`;

const DialogTitle = styled.span`
  flex: 1;
  white-space: nowrap;
`;

const HeaderButton = styled.button`
  display: flex;
  align-items: center;
  justify-content: center;
  width: 60px;
  height: 37px;
`;

const FieldSet = styled.div`
  padding-top: 10px;
`;

const FieldHeading = styled.div`
  display: flex;
  align-items: center;
  gap: 6px;
  margin: 0 8px 5px 9px;
  font-size: 13px;
  line-height: 20px;
  white-space: nowrap;

  &::after {
    content: '';
    flex: 1;
    border-top: 1px solid #dcdcdc;
  }
`;

const DialogRow = styled.div`
  position: relative;
  display: flex;
  align-items: center;
  gap: 6px;
  height: 29px;
  padding-left: 20px;
`;

const DialogCheck = styled(Check)`
  border: 1px solid #333;
  background: #fff;
`;

const DialogLabel = styled.label`
  padding: 0 1px;
  border: 1px dotted ${(p) => (p.$focused ? '#000' : 'transparent')};
  line-height: 21px;
`;

const RowMark = styled.div`
  position: absolute;
  top: -4px;
  left: -1px;
  right: 0;
  height: 37px;
  border: 5px solid ${RED};
`;

const Note = styled.div`
  position: absolute;
  top: -20px;
  left: calc(100% + 3px);
  display: flex;
  align-items: center;
  width: 347px;
  height: 78px;
  padding-bottom: 16px;
  background: #fff;
  color: ${RED};
  font-size: 37px;
  font-weight: 700;
  font-feature-settings: normal;
  white-space: nowrap;
`;

const NoteArrow = styled.svg`
  fill: none;
  stroke: ${RED};
  stroke-width: 2.5;
`;

const DialogActions = styled.div`
  display: flex;
  gap: 14px;
  padding: 12px 9px 0 21px;
`;

const DialogButton = styled.button`
  flex: 1;
  height: 29px;
  border: ${(p) => (p.$primary ? '2px solid #0078d7' : '1px solid #adadad')};
  background: #e1e1e1;
  font-size: 13px;
`;

const StatusRow = styled.footer`
  display: flex;
  align-items: center;
  height: 25px;
  flex-shrink: 0;
  padding: 3px 6px 0 14px;
  border-top: 1px solid #fff;
  background: #f5f5f5;
  line-height: 20px;
`;

const ViewName = styled.span`
  margin-right: 22px;
  font-size: 13px;
  white-space: nowrap;
`;

const StatusButton = styled.button`
  display: flex;
  align-items: center;
  gap: 4px;
  margin-right: 22px;
`;

const AccessibilityButton = styled(StatusButton)`
  margin-right: 0;
  font-weight: 700;
`;

const ViewButton = styled.button`
  display: flex;
`;

const ViewButtons = styled.div`
  display: flex;
  align-items: center;
  gap: 32px;
  margin: 0 23px 0 auto;
`;

const ZoomControls = styled.div`
  display: flex;
  align-items: center;
  gap: 6px;
`;

const ZoomSlider = styled.input`
  appearance: none;
  width: 125px;
  height: 14px;
  background:
    linear-gradient(#666, #666) center / 1px 7px no-repeat,
    linear-gradient(#777, #777) center / 100% 1px no-repeat;

  &::-webkit-slider-thumb {
    appearance: none;
    width: 6px;
    height: 14px;
    background: #606060;
  }
`;

const ZoomValue = styled.span`
  width: 48px;
  margin-left: 15px;
`;

export default App;
